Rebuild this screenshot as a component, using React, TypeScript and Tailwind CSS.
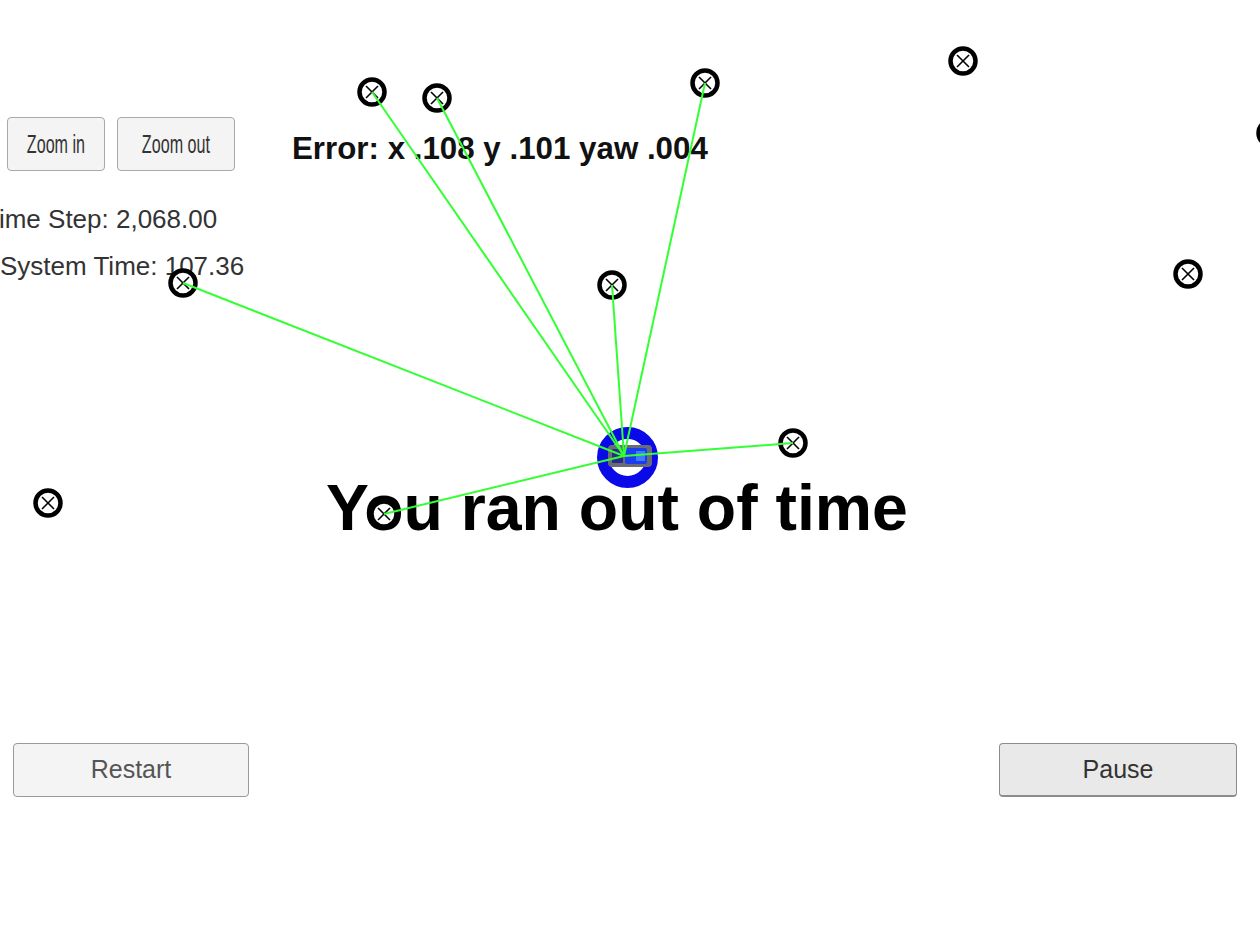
import React from "react";

const car = { x: 624, y: 456 };

// landmarks seen by the car get a green observation line
const landmarks = [
  { x: 372, y: 92, seen: true },
  { x: 437, y: 98, seen: true },
  { x: 705, y: 83, seen: true },
  { x: 963, y: 61, seen: false },
  { x: 1188, y: 274, seen: false },
  { x: 1271, y: 133, seen: false },
  { x: 612, y: 285, seen: true },
  { x: 183, y: 283, seen: true },
  { x: 793, y: 443, seen: true },
  { x: 48, y: 503, seen: false },
  { x: 384, y: 514, seen: true },
];

function Landmark({ x, y }: { x: number; y: number }) {
  return (
    <g>
      <circle cx={x} cy={y} r={12.5} fill="#fff" stroke="#000" strokeWidth={4.5} />
      <line x1={x - 6} y1={y - 6} x2={x + 6} y2={y + 6} stroke="#000" strokeWidth={1.6} />
      <line x1={x + 6} y1={y - 6} x2={x - 6} y2={y + 6} stroke="#000" strokeWidth={1.6} />
    </g>
  );
}

function Scene() {
  return (
    <svg
      className="absolute inset-0 pointer-events-none"
      width={1260}
      height={930}
      viewBox="0 0 1260 930"
    >
      <circle cx={627.5} cy={457.5} r={24.5} fill="#fff" stroke="#0a0ae8" strokeWidth={12} />
      <rect x={608} y={445} width={44} height={22} rx={4} fill="#6b6b78" />
      <rect x={625} y={448} width={22} height={16} rx={2} fill="#1b3cf0" />
      <rect x={612} y={449} width={11} height={14} rx={1} fill="#2a2a8a" />
      <rect x={636} y={451} width={9} height={10} fill="#3f7bff" />
      {landmarks.map((l, i) => (
        <Landmark key={i} x={l.x} y={l.y} />
      ))}
      {landmarks
        .filter((l) => l.seen)
        .map((l, i) => (
          <line
            key={i}
            x1={car.x}
            y1={car.y}
            x2={l.x}
            y2={l.y}
            stroke="#33ff33"
            strokeWidth={2}
          />
        ))}
    </svg>
  );
}

export default function App() {
  return (
    <div className="relative w-[1260px] h-[930px] overflow-hidden bg-white font-['Liberation_Sans',Arial,sans-serif]">
      <div className="flex gap-[12px] pt-[117px] pl-[7px]">
        <button className="w-[98px] h-[54px] rounded-[4px] border border-[#a9a9a9] bg-[#f4f4f4] text-[#333] flex items-center justify-center overflow-hidden">
          <span className="inline-block text-[26px] leading-none scale-x-[0.62] whitespace-nowrap">
            Zoom in
          </span>
        </button>
        <button className="w-[118px] h-[54px] rounded-[4px] border border-[#a9a9a9] bg-[#f4f4f4] text-[#333] flex items-center justify-center overflow-hidden">
          <span className="inline-block text-[26px] leading-none scale-x-[0.62] whitespace-nowrap">
            Zoom out
          </span>
        </button>
      </div>

      <div className="mt-[35px] ml-[-16px] text-[26px] leading-[26px] text-[#333] whitespace-nowrap">
        Time Step: 2,068.00
      </div>
      <div className="mt-[21px] text-[26px] leading-[26px] text-[#333] whitespace-nowrap">
        System Time: 107.36
      </div>

      <div className="absolute left-[292px] top-[133px] text-[31.3px] leading-[31px] font-bold text-[#111] whitespace-nowrap">
        Error: x .108 y .101 yaw .004
      </div>
      <div className="absolute left-[326px] top-[476px] text-[64.4px] leading-[64px] font-bold text-black whitespace-nowrap">
        You ran out of time
      </div>

      <Scene />

      <div className="absolute left-0 right-0 top-[743px] flex justify-between pl-[13px] pr-[23px]">
        <button className="w-[236px] h-[54px] rounded-[4px] border border-[#9a9a9a] bg-[#f4f4f4] text-[#555] text-[25px]">
          Restart
        </button>
        <button className="w-[238px] h-[54px] rounded-[4px] border border-[#8c8c8c] border-b-2 bg-[#e9e9e9] text-[#333] text-[25px]">
          Pause
        </button>
      </div>
    </div>
  );
}
